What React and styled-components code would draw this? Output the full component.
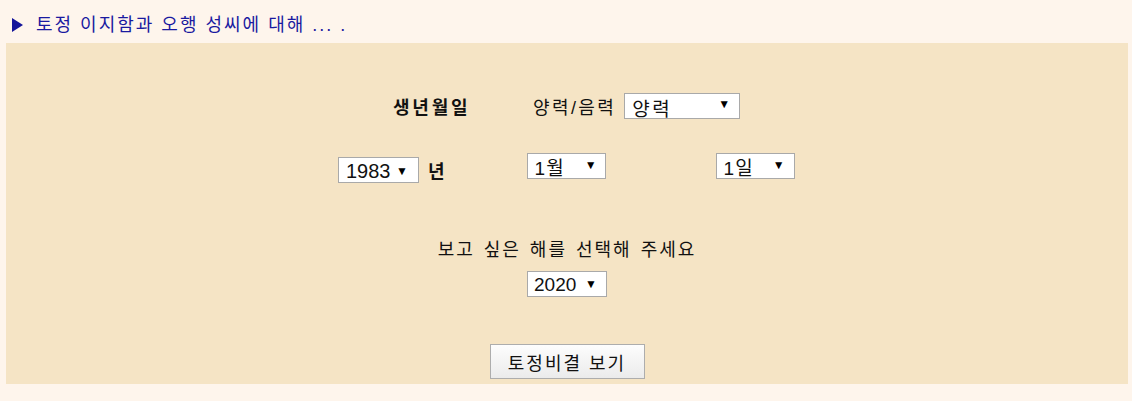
import React from 'react';
import styled, { createGlobalStyle } from 'styled-components';

const GlobalStyle = createGlobalStyle`
    html, body {
        margin: 0;
        padding: 0;
        background: #fef5ec;
    }
    body {
        font-family: "Liberation Sans", "Noto Sans CJK KR", sans-serif;
        color: #111;
    }
`;

const Page = styled.div`
    padding: 0 4px 0 6px;
`;

const Header = styled.div`
    height: 43px;
    display: flex;
    align-items: flex-start;
    padding-top: 13px;
    box-sizing: border-box;
`;

const Bullet = styled.svg`
    width: 11px;
    height: 14px;
    margin: 5px 13px 0 6px;
`;

const HeaderLink = styled.a`
    font-size: 18px;
    line-height: 24px;
    letter-spacing: 2px;
    color: #1a1aa0;
    text-decoration: none;
`;

const Panel = styled.div`
    background: #f5e4c5;
    padding: 50px 0 5px;
    display: flex;
    flex-direction: column;
`;

const Row = styled.div`
    display: flex;
    align-items: ${(p) => p.$align || 'center'};
    padding-left: ${(p) => p.$indent}px;
    margin-top: ${(p) => p.$top || 0}px;
`;

const Label = styled.span`
    font-size: 18px;
    font-weight: ${(p) => (p.$bold ? 700 : 400)};
    letter-spacing: ${(p) => p.$spacing || 0}px;
    width: ${(p) => (p.$width ? `${p.$width}px` : 'auto')};
    margin-left: ${(p) => p.$left || 0}px;
    margin-top: ${(p) => p.$top || 0}px;
`;

const SelectWrap = styled.span`
    position: relative;
    display: inline-block;
    height: 26px;
    margin-left: ${(p) => p.$left || 0}px;
    margin-top: ${(p) => p.$top || 0}px;
`;

const Select = styled.select`
    display: block;
    appearance: none;
    -webkit-appearance: none;
    box-sizing: border-box;
    width: ${(p) => p.$width}px;
    height: 26px;
    margin: 0;
    border: 1px solid #a9a9a9;
    border-radius: 0;
    background: #fff;
    font-family: "Liberation Sans", "Noto Sans CJK KR", sans-serif;
    font-size: ${(p) => p.$size || 19}px;
    letter-spacing: ${(p) => p.$spacing || 0}px;
    color: #111;
    padding: ${(p) => p.$pad || '0 0 0 7px'};
    outline: none;
`;

const Arrow = styled.span`
    position: absolute;
    right: ${(p) => p.$right}px;
    top: ${(p) => p.$top}px;
    font-family: "Liberation Sans", "DejaVu Sans", sans-serif;
    font-size: 12px;
    line-height: 12px;
    color: #000;
    pointer-events: none;
`;

const Center = styled.div`
    display: flex;
    flex-direction: column;
    align-items: center;
    margin-top: ${(p) => p.$top || 0}px;
`;

const Prompt = styled.div`
    font-size: 18px;
    line-height: 24px;
    letter-spacing: 2px;
    word-spacing: 2px;
`;

const Button = styled.button`
    width: 155px;
    height: 35px;
    border: 1px solid #adadad;
    border-radius: 0;
    background: linear-gradient(#fdfdfd, #ebebeb);
    font-family: "Liberation Sans", "Noto Sans CJK KR", sans-serif;
    font-size: 18px;
    color: #111;
    letter-spacing: 2px;
`;

const Dropdown = ({ width, value, options, arrowRight, arrowTop, pad, size, spacing, ...rest }) => (
    <SelectWrap {...rest}>
        <Select $width={width} $pad={pad} $size={size} $spacing={spacing} defaultValue={value}>
            {options.map((o) => (
                <option key={o}>{o}</option>
            ))}
        </Select>
        <Arrow $right={arrowRight} $top={arrowTop}>▼</Arrow>
    </SelectWrap>
);

const App = () => {
    return (
        <Page>
            <GlobalStyle />
            <Header>
                <Bullet viewBox="0 0 11 14">
                    <polygon points="0,0 11,7 0,14" fill="#14149a" />
                </Bullet>
                <HeaderLink href="#">토정 이지함과 오행 성씨에 대해 ... .</HeaderLink>
            </Header>
            <Panel>
                <Row $indent={387}>
                    <Label $bold $spacing={2.8} $width={140}>생년월일</Label>
                    <Label $spacing={2.4}>양력/음력</Label>
                    <Dropdown
                        $left={8}
                        width={116}
                        value="양력"
                        options={['양력', '음력']}
                        size={19}
                        spacing={2.5}
                        pad="5px 0 0 7px"
                        arrowRight={10}
                        arrowTop={5}
                    />
                </Row>
                <Row $indent={332} $top={34} $align="flex-start">
                    <Dropdown
                        $top={4}
                        width={81}
                        value="1983"
                        options={['1983']}
                        size={20}
                        pad="1px 0 0 7px"
                        arrowRight={11}
                        arrowTop={8}
                    />
                    <Label $bold $left={9} $top={4}>년</Label>
                    <Dropdown
                        $left={82}
                        width={79}
                        value="1월"
                        options={['1월']}
                        spacing={1}
                        pad="4px 0 0 7px"
                        arrowRight={9}
                        arrowTop={6}
                    />
                    <Dropdown
                        $left={110}
                        width={79}
                        value="1일"
                        options={['1일']}
                        spacing={1}
                        pad="4px 0 0 7px"
                        arrowRight={10}
                        arrowTop={6}
                    />
                </Row>
                <Center $top={55}>
                    <Prompt>보고 싶은 해를 선택해 주세요</Prompt>
                    <Dropdown
                        $top={9}
                        width={80}
                        value="2020"
                        options={['2020']}
                        pad="0 0 0 6px"
                        arrowRight={10}
                        arrowTop={7}
                    />
                </Center>
                <Center $top={47}>
                    <Button>토정비결 보기</Button>
                </Center>
            </Panel>
        </Page>
    );
};

export default App;
